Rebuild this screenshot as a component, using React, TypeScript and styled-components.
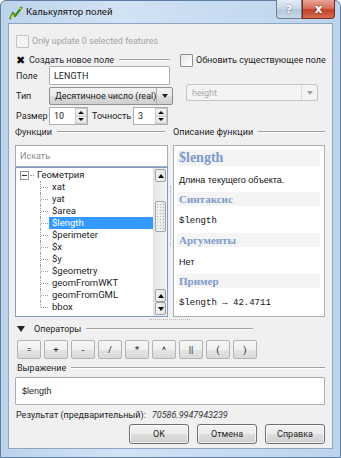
import styled, { createGlobalStyle } from 'styled-components';

const GlobalStyle = createGlobalStyle`
  html, body {
    margin: 0;
    padding: 0;
    background: #ffffff;
  }
  body {
    font-family: Roboto, 'Liberation Sans', sans-serif;
    font-size: 9px;
    color: #1e1e1e;
  }
  * {
    box-sizing: border-box;
  }
`;

const Window = styled.div`
  width: 341px;
  height: 458px;
  display: flex;
  flex-direction: column;
  padding: 0 7px 8px 7px;
  border: 1px solid #5f7d9e;
  border-radius: 6px 6px 0 0;
  background: linear-gradient(90deg, #bcd3ec 0%, #d3e3f4 35%, #c9dcf1 60%, #bed4ec 100%);
`;

const TitleBar = styled.div`
  height: 22px;
  display: flex;
  align-items: flex-start;
`;

const TitleIcon = styled.svg`
  margin: 4px 2px 0 0;
  flex: none;
`;

const TitleText = styled.div`
  margin-top: 5px;
  font-size: 9.5px;
  color: #101010;
  flex: 1;
`;

const CaptionButtons = styled.div`
  display: flex;
  margin-top: -1px;
  margin-right: -2px;
`;

const CaptionButton = styled.div<{ $close?: boolean }>`
  height: 19px;
  width: ${(p) => (p.$close ? 33 : 26)}px;
  display: flex;
  align-items: center;
  justify-content: center;
  border: 1px solid ${(p) => (p.$close ? '#7a2a20' : '#6f819a')};
  border-top: none;
  border-radius: ${(p) => (p.$close ? '0 0 4px 0' : '0 0 0 4px')};
  background: ${(p) =>
    p.$close
      ? 'linear-gradient(180deg, #e8a493 0%, #d6725f 45%, #c1402c 55%, #d36f50 100%)'
      : 'linear-gradient(180deg, #e4ecf5 0%, #ccd9e8 45%, #b7c8dc 55%, #c9d8ea 100%)'};
  color: #ffffff;
  font-family: 'DejaVu Sans', sans-serif;
  font-weight: bold;
  font-size: ${(p) => (p.$close ? 12 : 11)}px;
  text-shadow: 0 0 2px rgba(0, 0, 0, 0.6);
`;

const Client = styled.div`
  flex: 1;
  display: flex;
  flex-direction: column;
  background: #f0f0f0;
  border: 1px solid #8da6c4;
  padding: 0 7px 0 6px;
`;

const CheckRow = styled.div<{ $disabled?: boolean }>`
  height: 14px;
  display: flex;
  align-items: center;
  gap: 3px;
  color: ${(p) => (p.$disabled ? '#a3a3a3' : '#1e1e1e')};
  white-space: nowrap;
`;

const Box = styled.div<{ $disabled?: boolean }>`
  width: 13px;
  height: 13px;
  flex: none;
  border: 1px solid ${(p) => (p.$disabled ? '#c2c2c2' : '#8f8f8f')};
  background: ${(p) => (p.$disabled ? '#f4f4f4' : 'linear-gradient(135deg, #e6e6e6, #ffffff)')};
  border-radius: 1px;
`;

const XMark = styled.div`
  width: 11px;
  height: 11px;
  flex: none;
  display: flex;
  align-items: center;
  justify-content: center;
  font-family: 'DejaVu Sans', sans-serif;
  font-weight: bold;
  font-size: 11px;
  line-height: 1;
  color: #111;
`;

const TopUpdate = styled(CheckRow)`
  margin-top: 10px;
  padding-left: 1px;
`;

const TopGrid = styled.div`
  margin-top: 6px;
  display: grid;
  grid-template-columns: 155px 145px;
  column-gap: 10px;
`;

const Column = styled.div`
  display: flex;
  flex-direction: column;
`;

const GroupHead = styled.div<{ $lineEnd?: number }>`
  height: 12px;
  display: flex;
  align-items: center;
  gap: 3px;
  white-space: nowrap;
  &::after {
    content: '';
    flex: 1;
    height: 1px;
    margin-left: 2px;
    margin-right: ${(p) => p.$lineEnd ?? 0}px;
    background: #a0a0a0;
    border-bottom: 1px solid #ffffff;
  }
`;

const FormRow = styled.div<{ $top?: number; $h: number }>`
  margin-top: ${(p) => p.$top ?? 0}px;
  height: ${(p) => p.$h}px;
  display: flex;
  align-items: center;
  padding-left: 1px;
`;

const Label = styled.div<{ $w: number; $pad?: number }>`
  width: ${(p) => p.$w}px;
  padding-left: ${(p) => p.$pad ?? 0}px;
  flex: none;
`;

const LineEdit = styled.div`
  flex: 1;
  height: 100%;
  display: flex;
  align-items: center;
  padding-left: 4px;
  background: #ffffff;
  border: 1px solid #abadb3;
  border-radius: 1px;
`;

const Combo = styled.div<{ $disabled?: boolean }>`
  flex: 1;
  height: 100%;
  display: flex;
  align-items: stretch;
  border: 1px solid ${(p) => (p.$disabled ? '#c4c4c4' : '#8e8f8f')};
  border-radius: 2px;
  background: ${(p) =>
    p.$disabled ? '#f4f4f4' : 'linear-gradient(180deg, #f2f2f2 0%, #ebebeb 50%, #dddddd 51%, #cfcfcf 100%)'};
  color: ${(p) => (p.$disabled ? '#a8a8a8' : '#1e1e1e')};
`;

const ComboText = styled.div`
  flex: 1;
  display: flex;
  align-items: center;
  padding-left: 5px;
  white-space: nowrap;
`;

const ComboArrow = styled.div<{ $disabled?: boolean }>`
  width: 16px;
  display: flex;
  align-items: center;
  justify-content: center;
  border-left: 1px solid ${(p) => (p.$disabled ? '#dcdcdc' : '#b4b4b4')};
  &::before {
    content: '';
    border-left: 3.5px solid transparent;
    border-right: 3.5px solid transparent;
    border-top: 4px solid ${(p) => (p.$disabled ? '#a0a0a0' : '#222')};
  }
`;

const DisabledCombo = styled.div`
  margin: 18px 7px 0 6px;
  height: 17px;
  display: flex;
`;

const Spin = styled.div<{ $w: number }>`
  width: ${(p) => p.$w}px;
  height: 100%;
  display: flex;
  background: #ffffff;
  border: 1px solid #abadb3;
`;

const SpinText = styled.div`
  flex: 1;
  display: flex;
  align-items: center;
  padding-left: 4px;
`;

const SpinButtons = styled.div`
  width: 12px;
  display: flex;
  flex-direction: column;
`;

const SpinBtn = styled.div<{ $down?: boolean }>`
  flex: 1;
  display: flex;
  align-items: center;
  justify-content: center;
  background: linear-gradient(180deg, #f6f6f6, #e4e4e4);
  border: 1px solid #c8c8c8;
  margin-top: ${(p) => (p.$down ? -1 : 0)}px;
  &::before {
    content: '';
    border-left: 3px solid transparent;
    border-right: 3px solid transparent;
    ${(p) => (p.$down ? 'border-top: 3px solid #111;' : 'border-bottom: 3px solid #111;')}
  }
`;

const FuncGrid = styled.div`
  margin-top: 1px;
  display: grid;
  grid-template-columns: 153px 5px 152px;
`;

const VSplit = styled.div`
  display: flex;
  justify-content: center;
  padding-top: 60px;
  &::before {
    content: '';
    width: 0;
    height: 60px;
    border-left: 1px dotted #b5b5b5;
  }
`;

const Search = styled.div`
  margin-top: 7px;
  height: 22px;
  display: flex;
  align-items: center;
  padding-left: 4px;
  background: #ffffff;
  border: 1px solid #abadb3;
  color: #8a8a8a;
`;

const Tree = styled.div`
  height: 150px;
  display: flex;
  background: #ffffff;
  border: 1px solid #7f9dc9;
  overflow: hidden;
`;

const TreeBody = styled.div`
  flex: 1;
  padding-top: 1px;
  font-size: 9.5px;
`;

const TreeItem = styled.div<{ $level: number }>`
  height: 12px;
  display: flex;
  align-items: center;
  padding-left: ${(p) => (p.$level === 0 ? 4 : 24)}px;
  white-space: nowrap;
  line-height: 12px;
`;

const Guide = styled.div<{ $last?: boolean }>`
  width: 8px;
  flex: none;
  position: relative;
  margin-right: 1px;
  border-left: 1px dotted #a0a0a0;
  height: ${(p) => (p.$last ? '6px' : '12px')};
  align-self: flex-start;
  &::after {
    content: '';
    position: absolute;
    left: 0;
    top: 6px;
    width: 7px;
    border-top: 1px dotted #a0a0a0;
  }
`;

const Expander = styled.div`
  width: 9px;
  height: 9px;
  flex: none;
  border: 1px solid #919191;
  background: #ffffff;
  display: flex;
  align-items: center;
  justify-content: center;
  margin-right: 1px;
  &::before {
    content: '';
    width: 5px;
    height: 1px;
    background: #333;
  }
`;

const ExpanderTail = styled.div`
  width: 4px;
  border-top: 1px dotted #a0a0a0;
  margin-right: 0;
`;

const ItemText = styled.div<{ $selected?: boolean }>`
  height: 12px;
  display: flex;
  align-items: center;
  padding: 0 3px;
  flex: ${(p) => (p.$selected ? 1 : 'none')};
  background: ${(p) => (p.$selected ? '#3399ff' : 'transparent')};
  color: ${(p) => (p.$selected ? '#ffffff' : '#1e1e1e')};
`;

const ScrollBar = styled.div`
  width: 14px;
  flex: none;
  display: flex;
  flex-direction: column;
  background: linear-gradient(90deg, #e6e6e6, #f3f3f3);
  border-left: 1px solid #e0e0e0;
  padding: 1px 0;
`;

const ScrollArrow = styled.div<{ $down?: boolean }>`
  height: 13px;
  margin: 0 1px;
  flex: none;
  display: flex;
  align-items: center;
  justify-content: center;
  border: 1px solid #a0a0a0;
  border-radius: 2px;
  background: linear-gradient(90deg, #f3f3f3, #e2e2e2);
  &::before {
    content: '';
    border-left: 3.5px solid transparent;
    border-right: 3.5px solid transparent;
    ${(p) => (p.$down ? 'border-top: 4px solid #111;' : 'border-bottom: 4px solid #111;')}
  }
`;

const Thumb = styled.div`
  margin: 19px 1px 0;
  height: 31px;
  border: 1px solid #a5a5a5;
  border-radius: 2px;
  background:
    radial-gradient(circle, #b4b4b4 0.6px, transparent 0.8px) center / 3px 3px,
    linear-gradient(90deg, #f6f6f6, #e4e4e4);
`;

const ScrollSpacer = styled.div`
  flex: 1;
`;

const DescPanel = styled.div`
  margin-top: 7px;
  height: 172px;
  background: #ffffff;
  border: 1px solid #abadb3;
  padding: 4px 4px 0 3px;
  overflow: hidden;
`;

const DescHead = styled.div<{ $big?: boolean }>`
  height: ${(p) => (p.$big ? 16 : 14)}px;
  display: flex;
  align-items: center;
  padding-left: 2px;
  background: #f4f4f4;
  font-family: 'Liberation Serif', serif;
  font-weight: bold;
  font-size: ${(p) => (p.$big ? 14 : 11)}px;
  color: #7d9bcb;
`;

const DescText = styled.div<{ $mono?: boolean; $top?: number }>`
  margin: ${(p) => p.$top ?? 9}px 0 6px 2px;
  height: 12px;
  display: flex;
  align-items: center;
  font-family: ${(p) => (p.$mono ? "'Liberation Mono', monospace" : "'Liberation Sans', sans-serif")};
  font-size: 9px;
  color: #111;
  white-space: nowrap;
`;

const Splitter = styled.div`
  height: 6px;
  display: flex;
  justify-content: center;
  align-items: center;
  &::before {
    content: '';
    width: 40px;
    height: 1px;
    border-top: 1px dotted #b8b8b8;
  }
`;

const SectionHead = styled(GroupHead)<{ $top?: number }>`
  padding-left: 2px;
  margin-top: ${(p) => p.$top ?? 0}px;
`;

const Triangle = styled.div`
  width: 0;
  height: 0;
  margin-right: 6px;
  border-left: 4.5px solid transparent;
  border-right: 4.5px solid transparent;
  border-top: 6px solid #222;
`;

const OpRow = styled.div`
  margin-top: 5px;
  display: flex;
  gap: 3px;
  padding-left: 2px;
`;

const OpButton = styled.div`
  width: 24px;
  height: 19px;
  display: flex;
  align-items: center;
  justify-content: center;
  border: 1px solid #b3b3b3;
  border-radius: 2px;
  background: linear-gradient(180deg, #f7f7f7 0%, #efefef 50%, #e4e4e4 51%, #dadada 100%);
  font-size: 9.5px;
  color: #222;
`;

const Expression = styled.div`
  margin-top: 3px;
  height: 28px;
  display: flex;
  align-items: center;
  padding-left: 6px;
  background: #ffffff;
  border: 1px solid #abadb3;
  border-radius: 1px;
  font-family: 'Liberation Sans', sans-serif;
  font-size: 9px;
`;

const ResultRow = styled.div`
  margin-top: 4px;
  height: 12px;
  display: flex;
  align-items: center;
  gap: 6px;
  padding-left: 1px;
  white-space: nowrap;
`;

const ResultValue = styled.span`
  font-style: italic;
  color: #333;
`;

const DialogButtons = styled.div`
  margin-top: 3px;
  display: flex;
  justify-content: flex-end;
  gap: 8px;
`;

const DialogButton = styled.div`
  width: 60px;
  height: 20px;
  display: flex;
  align-items: center;
  justify-content: center;
  border: 1px solid #707070;
  border-radius: 3px;
  background: linear-gradient(180deg, #f2f2f2 0%, #ebebeb 50%, #dddddd 51%, #cfcfcf 100%);
  box-shadow: inset 0 0 0 1px rgba(255, 255, 255, 0.7);
`;

const treeItems = [
  'xat',
  'yat',
  '$area',
  '$length',
  '$perimeter',
  '$x',
  '$y',
  '$geometry',
  'geomFromWKT',
  'geomFromGML',
  'bbox',
];

const operators = ['=', '+', '-', '/', '*', '^', '||', '(', ')'];

const App = () => (
  <>
    <GlobalStyle />
    <Window>
      <TitleBar>
        <TitleIcon width="16" height="16" viewBox="0 0 16 16">
          <path d="M2 14 L5 8 L7 11 L14 2" fill="none" stroke="#3d8c1e" strokeWidth="2.2" strokeLinejoin="round" />
          <path d="M3 13 L5.5 9.5" stroke="#e7d23a" strokeWidth="1.4" />
          <path d="M11 3 L14 2 L13 5" fill="#f1e25a" stroke="#6a8a1c" strokeWidth="0.6" />
        </TitleIcon>
        <TitleText>Калькулятор полей</TitleText>
        <CaptionButtons>
          <CaptionButton>?</CaptionButton>
          <CaptionButton $close>x</CaptionButton>
        </CaptionButtons>
      </TitleBar>
      <Client>
        <TopUpdate $disabled>
          <Box $disabled />
          Only update 0 selected features
        </TopUpdate>

        <TopGrid>
          <Column>
            <GroupHead>
              <XMark>✖</XMark>
              Создать новое поле
            </GroupHead>
            <FormRow $h={19}>
              <Label $w={33}>Поле</Label>
              <LineEdit>LENGTH</LineEdit>
            </FormRow>
            <FormRow $top={2} $h={18}>
              <Label $w={33}>Тип</Label>
              <Combo>
                <ComboText>Десятичное число (real)</ComboText>
                <ComboArrow />
              </Combo>
            </FormRow>
            <FormRow $top={2} $h={18}>
              <Label $w={33}>Размер</Label>
              <Spin $w={39}>
                <SpinText>10</SpinText>
                <SpinButtons>
                  <SpinBtn />
                  <SpinBtn $down />
                </SpinButtons>
              </Spin>
              <Label $w={45} $pad={4}>Точность</Label>
              <Spin $w={35}>
                <SpinText>3</SpinText>
                <SpinButtons>
                  <SpinBtn />
                  <SpinBtn $down />
                </SpinButtons>
              </Spin>
            </FormRow>
          </Column>
          <Column>
            <GroupHead>
              <Box />
              Обновить существующее поле
            </GroupHead>
            <DisabledCombo>
              <Combo $disabled>
                <ComboText>height</ComboText>
                <ComboArrow $disabled />
              </Combo>
            </DisabledCombo>
          </Column>
        </TopGrid>

        <FuncGrid>
          <Column>
            <GroupHead $lineEnd={3}>Функции</GroupHead>
            <Search>Искать</Search>
            <Tree>
              <TreeBody>
                <TreeItem $level={0}>
                  <Expander />
                  <ExpanderTail />
                  <ItemText>Геометрия</ItemText>
                </TreeItem>
                {treeItems.map((t, i) => (
                  <TreeItem key={t} $level={1}>
                    <Guide $last={i === treeItems.length - 1} />
                    <ItemText $selected={t === '$length'}>{t}</ItemText>
                  </TreeItem>
                ))}
              </TreeBody>
              <ScrollBar>
                <ScrollArrow />
                <Thumb />
                <ScrollSpacer />
                <ScrollArrow />
                <ScrollArrow $down />
              </ScrollBar>
            </Tree>
          </Column>
          <VSplit />
          <Column>
            <GroupHead>Описание функции</GroupHead>
            <DescPanel>
              <DescHead $big>$length</DescHead>
              <DescText $top={8}>Длина текущего объекта.</DescText>
              <DescHead>Синтаксис</DescHead>
              <DescText $mono>$length</DescText>
              <DescHead>Аргументы</DescHead>
              <DescText>Нет</DescText>
              <DescHead>Пример</DescHead>
              <DescText $mono>$length → 42.4711</DescText>
            </DescPanel>
          </Column>
        </FuncGrid>

        <Splitter />

        <SectionHead $lineEnd={72}>
          <Triangle />
          Операторы
        </SectionHead>
        <OpRow>
          {operators.map((o) => (
            <OpButton key={o}>{o}</OpButton>
          ))}
        </OpRow>

        <SectionHead $top={3}>Выражение</SectionHead>
        <Expression>$length</Expression>

        <ResultRow>
          Результат (предварительный):
          <ResultValue>70586.9947943239</ResultValue>
        </ResultRow>

        <DialogButtons>
          <DialogButton>OK</DialogButton>
          <DialogButton>Отмена</DialogButton>
          <DialogButton>Справка</DialogButton>
        </DialogButtons>
      </Client>
    </Window>
  </>
);

export default App;
